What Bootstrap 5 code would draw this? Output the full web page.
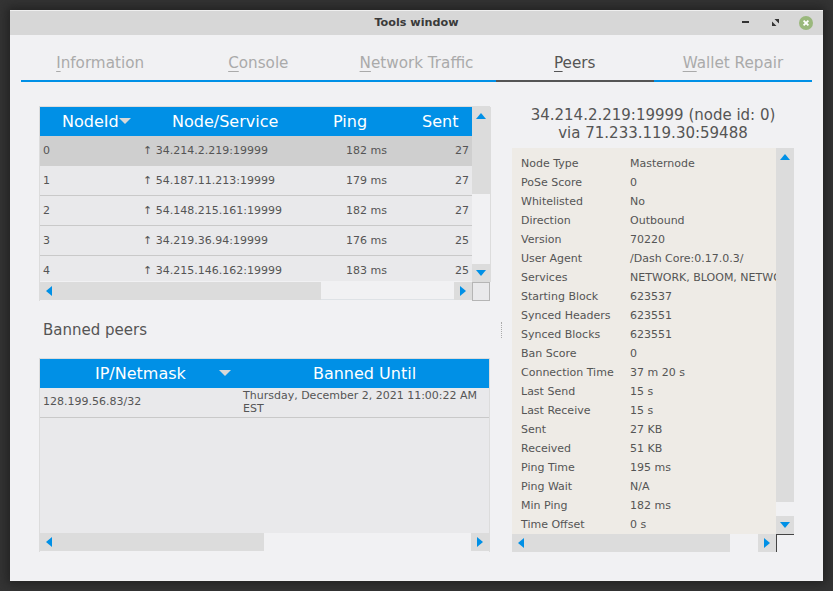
<!DOCTYPE html>
<html lang="en">
<head>
<meta charset="utf-8">
<title>Tools window</title>
<link href="https://cdn.jsdelivr.net/npm/bootstrap@5.3.0/dist/css/bootstrap.min.css" rel="stylesheet">
<style>
html,body{height:591px;overflow:hidden}
body{background:#343434;font-family:"DejaVu Sans",sans-serif;color:#555;padding:10px;margin:0}
.tool-win{width:813px;height:571px;background:#f1f1f3;box-shadow:0 0 10px 3px #222;overflow:hidden}
.title-bar{height:25px;background:#d7d7d7;padding-right:10px;box-shadow:inset 0 1px 0 #efefef}
.title-text{font-size:11.2px;font-weight:700;color:#3a3a3a;left:0;right:0;line-height:27px}
.wm-min{width:7px;height:2px;background:#333;margin-right:23px;margin-top:-1px}
.wm-max{margin-right:20px;margin-top:-1px}
.tab-row{margin:0 11px;height:47px}
.tab-item{flex:1 1 0;height:47px;border-bottom:2px solid #0090e6;font-size:15.2px;color:#aaa;line-height:57px;text-align:center;text-decoration:none}
.tab-item u{text-underline-offset:3px}
.tab-item.on{color:#555;border-bottom-color:#555;border-bottom-width:2px}
.main-area{padding:24px 29px 0}
.left-col{width:451px}
.split-zone{width:22px}
.split-dots{height:16px;border-left:1px dotted #aaa;margin-top:216px}
.right-col{width:282px}
.frame-a{height:195px;border:1px solid #dcdcdc;border-right-width:0;border-bottom-width:0}
.frame-b{height:194px;border:1px solid #dcdcdc;border-bottom-width:0}
.head-blue{background:#0090e6;color:#fff;font-size:16px;height:29px;line-height:29px}
.rows-a{width:432px;height:174px}
.rows-view{height:145px;overflow:hidden}
.row-a{height:30px;line-height:30px;font-size:11px;background:#e9e9eb;border-bottom:1px solid #c9c9c9}
.row-a.sel{background:#cfcfcf;border-bottom-color:#cfcfcf}
.ca{width:103px;padding-left:3px}
.cb{width:167px}
.cc{width:80px;text-align:right;padding-right:3px}
.cd{width:82px;text-align:right;padding-right:3px}
.ha{width:104px;padding-left:22px}
.hb{width:166px;padding-left:28px}
.hc{width:80px;padding-left:23px}
.hd{width:82px;padding-left:32px}
.sort-tri{display:inline-block;width:0;height:0;border-left:6px solid transparent;border-right:6px solid transparent;border-top:6px solid #d8d8d8;vertical-align:3px}
.vbar{width:18px;background:#f1f1f3}
.vbar-a{height:175px;border-right:1px solid #dcdcdc;width:19px}
.sb-btn{width:18px;height:18px;background:#dcdcdc;flex:none}
.thumb-a{height:69px;background:#dcdcdc}
.gap-fill{flex:1 1 auto}
.hbar{height:18px;background:#f1f1f3}
.hbar-btn{width:18px;height:18px;background:#dcdcdc;flex:none}
.hthumb-a{width:281px;height:18px;background:#dcdcdc}
.hthumb-c{width:224px;height:18px;background:#dcdcdc}
.arr-l{margin-left:6px}
.corner-a{width:18px;height:19px;background:#e9e9eb;border:1px solid #b5b5b5}
.banned-title{font-size:15px;height:57px;line-height:59px;padding-left:4px}
.ip-head{width:175px;padding-left:55px}
.ip-tri{width:25px;padding-left:4px}
.until-head{flex:1 1 auto;text-align:center}
.ban-row{height:30px;background:#e9e9eb;border-bottom:1px solid #c9c9c9;font-size:11px}
.ban-ip{width:203px;padding-left:3px}
.ban-date{line-height:13px;flex:1 1 auto;margin-top:-2px}
.ban-empty{height:115px;background:#e9e9eb}
.peer-title{font-size:15px;line-height:18px;text-align:center;height:42px;color:#555}
.detail-box{width:264px;height:386px;background:#eeebe6;overflow:hidden;padding:6px 0 0 9px;font-size:11px}
.det-row{height:19px;line-height:19px;white-space:nowrap}
.det-k{width:109px;flex:none}
.thumb-b{height:336px;background:#dcdcdc}
.tail-b{height:14px}
.hthumb-b{width:218px;background:#dcdcdc;height:18px}
.corner-b{width:18px;height:18px;border-left:1px solid #444;border-top:1px solid #444}
.hbar-b{width:264px}
.win-ico{display:block}
</style>
</head>
<body>
<div class="tool-win d-flex flex-column">
  <div class="title-bar d-flex align-items-center justify-content-end position-relative">
    <div class="title-text position-absolute text-center">Tools window</div>
    <div class="wm-min"></div>
    <svg class="wm-max win-ico" width="7" height="7" viewBox="0 0 7 7"><path d="M2.5 0H7V4.5ZM4.5 7H0V2.5Z" fill="#333"/></svg>
    <svg class="win-ico" width="14" height="14" viewBox="0 0 14 14"><circle cx="7" cy="7" r="7" fill="#9ab87c"/><path d="M4.6 4.6 9.4 9.4M9.4 4.6 4.6 9.4" stroke="#fff" stroke-width="1.8"/></svg>
  </div>
  <nav class="tab-row d-flex">
    <a class="tab-item" href="#"><u>I</u>nformation</a>
    <a class="tab-item" href="#"><u>C</u>onsole</a>
    <a class="tab-item" href="#"><u>N</u>etwork Traffic</a>
    <a class="tab-item on" href="#"><u>P</u>eers</a>
    <a class="tab-item" href="#"><u>W</u>allet Repair</a>
  </nav>
  <div class="main-area d-flex">
    <div class="left-col">
      <div class="frame-a">
        <div class="d-flex">
          <div class="rows-a">
            <div class="head-blue d-flex text-nowrap">
              <div class="ha">NodeId<span class="sort-tri"></span></div>
              <div class="hb">Node/Service</div>
              <div class="hc">Ping</div>
              <div class="hd">Sent</div>
            </div>
            <div class="rows-view">
              <div class="row-a sel d-flex"><div class="ca">0</div><div class="cb">↑ 34.214.2.219:19999</div><div class="cc">182 ms</div><div class="cd">27</div></div>
              <div class="row-a d-flex"><div class="ca">1</div><div class="cb">↑ 54.187.11.213:19999</div><div class="cc">179 ms</div><div class="cd">27</div></div>
              <div class="row-a d-flex"><div class="ca">2</div><div class="cb">↑ 54.148.215.161:19999</div><div class="cc">182 ms</div><div class="cd">27</div></div>
              <div class="row-a d-flex"><div class="ca">3</div><div class="cb">↑ 34.219.36.94:19999</div><div class="cc">176 ms</div><div class="cd">25</div></div>
              <div class="row-a d-flex"><div class="ca">4</div><div class="cb">↑ 34.215.146.162:19999</div><div class="cc">183 ms</div><div class="cd">25</div></div>
            </div>
          </div>
          <div class="vbar vbar-a d-flex flex-column">
            <div class="sb-btn d-flex align-items-center justify-content-center"><svg width="10" height="6" viewBox="0 0 10 6"><path d="M5 0 10 6H0Z" fill="#0090e6"/></svg></div>
            <div class="thumb-a"></div>
            <div class="gap-fill"></div>
            <div class="sb-btn d-flex align-items-center justify-content-center"><svg width="10" height="6" viewBox="0 0 10 6"><path d="M0 0H10L5 6Z" fill="#0090e6"/></svg></div>
          </div>
        </div>
        <div class="d-flex">
          <div class="hbar d-flex flex-grow-1 border-bottom">
            <div class="hthumb-a d-flex align-items-center"><svg class="arr-l" width="6" height="10" viewBox="0 0 6 10"><path d="M6 0V10L0 5Z" fill="#0090e6"/></svg></div>
            <div class="gap-fill"></div>
            <div class="hbar-btn d-flex align-items-center justify-content-center"><svg width="6" height="10" viewBox="0 0 6 10"><path d="M0 0 6 5 0 10Z" fill="#0090e6"/></svg></div>
          </div>
          <div class="corner-a"></div>
        </div>
      </div>
      <div class="banned-title">Banned peers</div>
      <div class="frame-b">
        <div class="head-blue d-flex text-nowrap">
          <div class="ip-head">IP/Netmask</div>
          <div class="ip-tri"><span class="sort-tri"></span></div>
          <div class="until-head">Banned Until</div>
        </div>
        <div class="ban-row d-flex align-items-center">
          <div class="ban-ip">128.199.56.83/32</div>
          <div class="ban-date">Thursday, December 2, 2021 11:00:22 AM<br>EST</div>
        </div>
        <div class="ban-empty"></div>
        <div class="hbar d-flex">
          <div class="hthumb-c d-flex align-items-center"><svg class="arr-l" width="6" height="10" viewBox="0 0 6 10"><path d="M6 0V10L0 5Z" fill="#0090e6"/></svg></div>
          <div class="gap-fill"></div>
          <div class="hbar-btn d-flex align-items-center justify-content-center"><svg width="6" height="10" viewBox="0 0 6 10"><path d="M0 0 6 5 0 10Z" fill="#0090e6"/></svg></div>
        </div>
      </div>
    </div>
    <div class="split-zone d-flex justify-content-center"><div class="split-dots"></div></div>
    <div class="right-col">
      <div class="peer-title">34.214.2.219:19999 (node id: 0)<br>via 71.233.119.30:59488</div>
      <div class="d-flex">
        <div class="detail-box">
          <div class="det-row d-flex"><div class="det-k">Node Type</div><div>Masternode</div></div>
          <div class="det-row d-flex"><div class="det-k">PoSe Score</div><div>0</div></div>
          <div class="det-row d-flex"><div class="det-k">Whitelisted</div><div>No</div></div>
          <div class="det-row d-flex"><div class="det-k">Direction</div><div>Outbound</div></div>
          <div class="det-row d-flex"><div class="det-k">Version</div><div>70220</div></div>
          <div class="det-row d-flex"><div class="det-k">User Agent</div><div>/Dash Core:0.17.0.3/</div></div>
          <div class="det-row d-flex"><div class="det-k">Services</div><div>NETWORK, BLOOM, NETWORK_LIMITED</div></div>
          <div class="det-row d-flex"><div class="det-k">Starting Block</div><div>623537</div></div>
          <div class="det-row d-flex"><div class="det-k">Synced Headers</div><div>623551</div></div>
          <div class="det-row d-flex"><div class="det-k">Synced Blocks</div><div>623551</div></div>
          <div class="det-row d-flex"><div class="det-k">Ban Score</div><div>0</div></div>
          <div class="det-row d-flex"><div class="det-k">Connection Time</div><div>37 m 20 s</div></div>
          <div class="det-row d-flex"><div class="det-k">Last Send</div><div>15 s</div></div>
          <div class="det-row d-flex"><div class="det-k">Last Receive</div><div>15 s</div></div>
          <div class="det-row d-flex"><div class="det-k">Sent</div><div>27 KB</div></div>
          <div class="det-row d-flex"><div class="det-k">Received</div><div>51 KB</div></div>
          <div class="det-row d-flex"><div class="det-k">Ping Time</div><div>195 ms</div></div>
          <div class="det-row d-flex"><div class="det-k">Ping Wait</div><div>N/A</div></div>
          <div class="det-row d-flex"><div class="det-k">Min Ping</div><div>182 ms</div></div>
          <div class="det-row d-flex"><div class="det-k">Time Offset</div><div>0 s</div></div>
        </div>
        <div class="vbar d-flex flex-column">
          <div class="sb-btn d-flex align-items-center justify-content-center"><svg width="10" height="6" viewBox="0 0 10 6"><path d="M5 0 10 6H0Z" fill="#0090e6"/></svg></div>
          <div class="thumb-b"></div>
          <div class="tail-b"></div>
          <div class="sb-btn d-flex align-items-center justify-content-center"><svg width="10" height="6" viewBox="0 0 10 6"><path d="M0 0H10L5 6Z" fill="#0090e6"/></svg></div>
        </div>
      </div>
      <div class="d-flex">
        <div class="hbar hbar-b d-flex">
          <div class="hthumb-b d-flex align-items-center"><svg class="arr-l" width="6" height="10" viewBox="0 0 6 10"><path d="M6 0V10L0 5Z" fill="#0090e6"/></svg></div>
          <div class="gap-fill"></div>
          <div class="hbar-btn d-flex align-items-center justify-content-center"><svg width="6" height="10" viewBox="0 0 6 10"><path d="M0 0 6 5 0 10Z" fill="#0090e6"/></svg></div>
        </div>
        <div class="corner-b"></div>
      </div>
    </div>
  </div>
</div>
<script src="https://cdn.jsdelivr.net/npm/bootstrap@5.3.0/dist/js/bootstrap.bundle.min.js"></script>
</body>
</html>
